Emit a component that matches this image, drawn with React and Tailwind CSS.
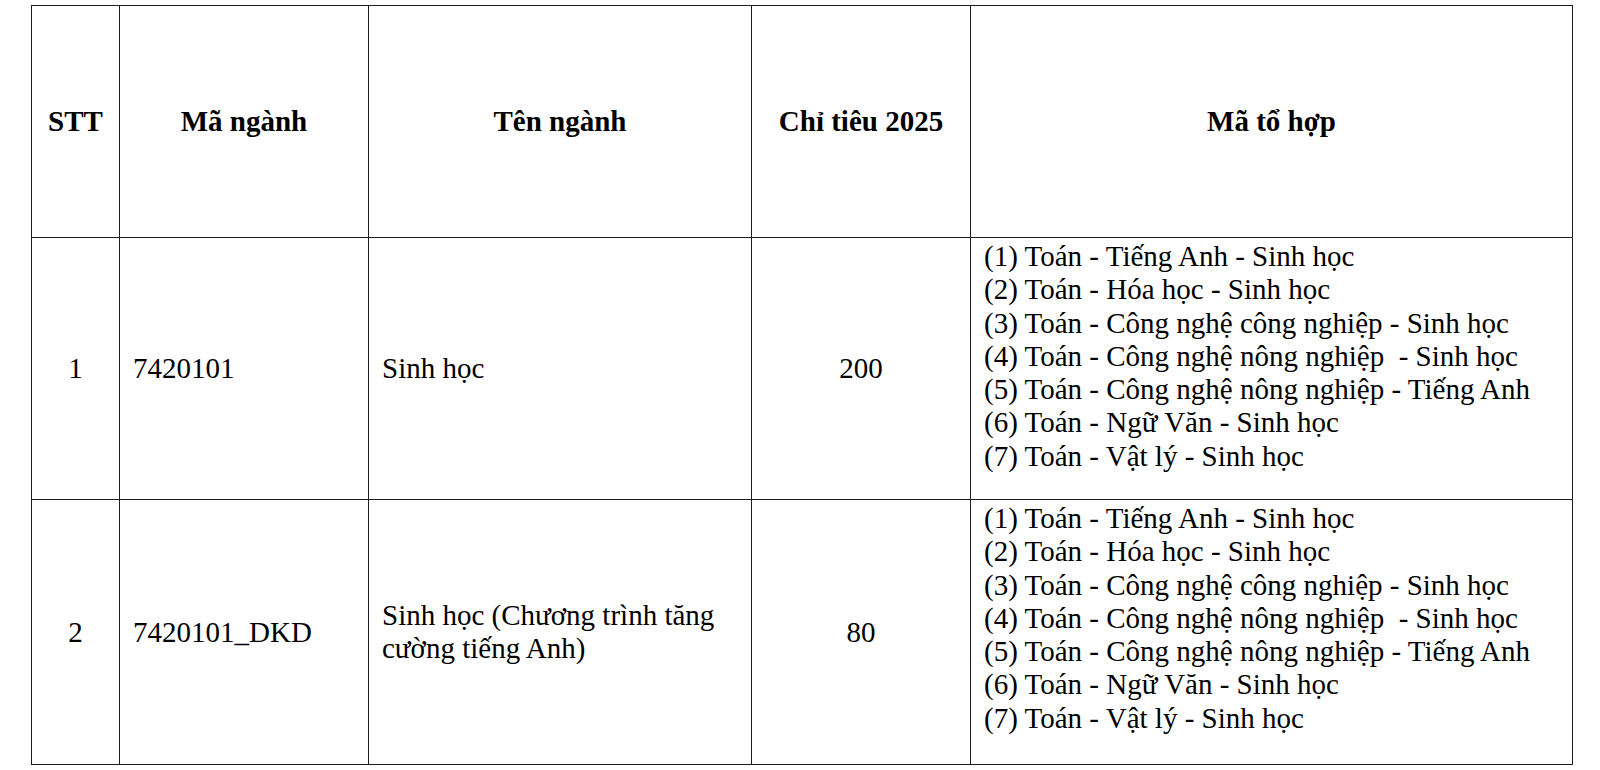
import React from "react";

const toHop = [
  "(1) Toán - Tiếng Anh - Sinh học",
  "(2) Toán - Hóa học - Sinh học",
  "(3) Toán - Công nghệ công nghiệp - Sinh học",
  "(4) Toán - Công nghệ nông nghiệp  - Sinh học",
  "(5) Toán - Công nghệ nông nghiệp - Tiếng Anh",
  "(6) Toán - Ngữ Văn - Sinh học",
  "(7) Toán - Vật lý - Sinh học",
];

const rows = [
  { stt: "1", ma: "7420101", ten: ["Sinh học"], chiTieu: "200", h: "h-[262px]" },
  {
    stt: "2",
    ma: "7420101_DKD",
    ten: ["Sinh học (Chương trình tăng", "cường tiếng Anh)"],
    chiTieu: "80",
    h: "h-[265px]",
  },
];

const cell = "border-[1.5px] border-[#1c1c1c] px-[13px]";

export default function App() {
  return (
    <div className="min-h-screen w-full bg-white pt-[5px] pl-[31px] font-['Liberation_Serif','Times_New_Roman',serif] text-[29px] text-black">
      <table className="table-fixed border-collapse w-[1541px]">
        <colgroup>
          <col className="w-[88px]" />
          <col className="w-[249px]" />
          <col className="w-[383px]" />
          <col className="w-[219px]" />
          <col className="w-[602px]" />
        </colgroup>
        <thead>
          <tr className="h-[232px]">
            {["STT", "Mã ngành", "Tên ngành", "Chỉ tiêu 2025", "Mã tổ hợp"].map((t) => (
              <th key={t} className={`${cell} text-center align-middle font-bold leading-[33px]`}>
                {t}
              </th>
            ))}
          </tr>
        </thead>
        <tbody>
          {rows.map((r) => (
            <tr key={r.stt} className={r.h}>
              <td className={`${cell} text-center align-middle leading-[33px]`}>{r.stt}</td>
              <td className={`${cell} align-middle leading-[33px]`}>{r.ma}</td>
              <td className={`${cell} align-middle leading-[33px]`}>
                {r.ten.map((l) => (
                  <div key={l}>{l}</div>
                ))}
              </td>
              <td className={`${cell} text-center align-middle leading-[33px]`}>{r.chiTieu}</td>
              <td className={`${cell} align-top pt-[2px] leading-[33.3px]`}>
                {toHop.map((l) => (
                  <div key={l} className="whitespace-pre">
                    {l}
                  </div>
                ))}
              </td>
            </tr>
          ))}
        </tbody>
      </table>
    </div>
  );
}
